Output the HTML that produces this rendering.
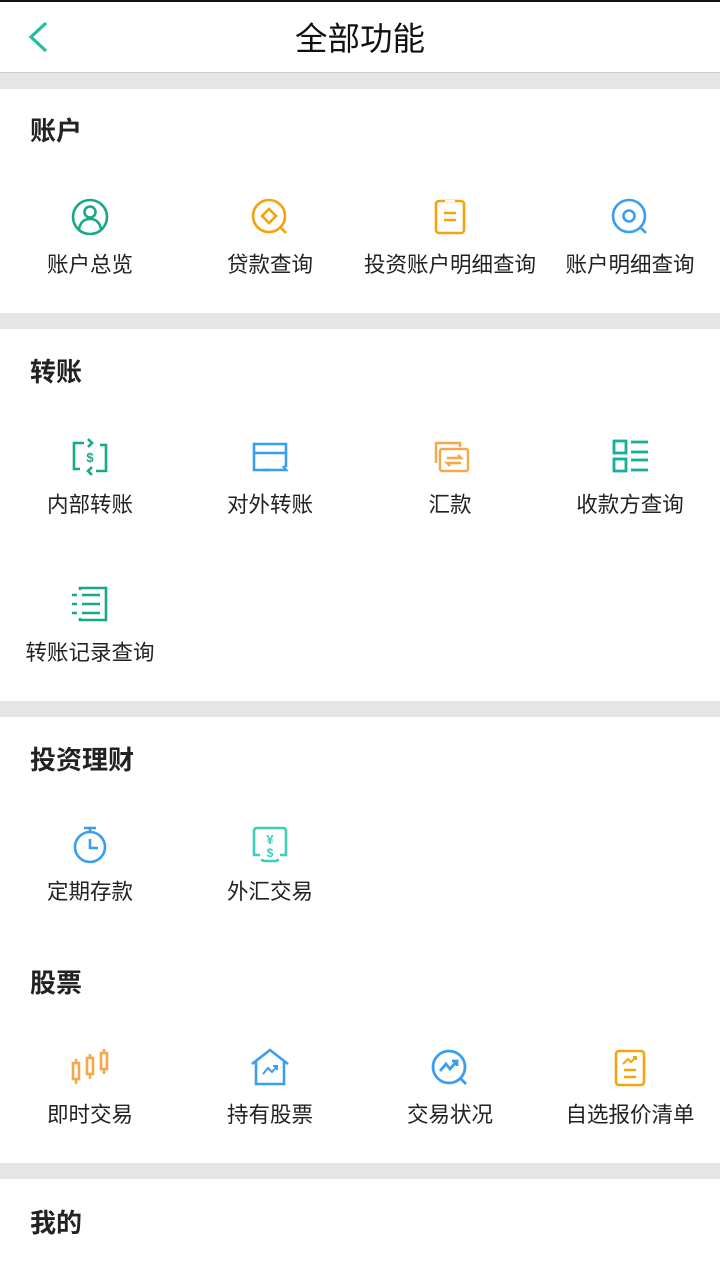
<!DOCTYPE html>
<html><head><meta charset="utf-8"><style>
*{margin:0;padding:0;box-sizing:border-box}
body{width:720px;height:1280px;background:#fff;position:relative;overflow:hidden;font-family:"Liberation Sans","Noto Sans CJK SC",sans-serif;color:#222}
.a{position:absolute}
.gray{position:absolute;left:0;width:720px;height:16px;background:#e6e5e3}
.t{position:absolute;left:30px;font-size:26px;font-weight:bold;color:#222;line-height:1}
.lab{position:absolute;width:180px;text-align:center;font-size:21.5px;color:#222;line-height:1}
.ic{position:absolute;width:40px;height:40px}
</style></head><body>
<div class="a" style="left:0;top:0;width:720px;height:2px;background:#111"></div>
<svg class="a" style="left:26px;top:20px" width="26" height="34" viewBox="0 0 26 34"><path d="M20 3 L5 17 L20 31" fill="none" stroke="#1fbf9f" stroke-width="3.2"/></svg>
<div class="a" style="left:0;top:20px;width:720px;text-align:center;font-size:32.5px;line-height:1.2;color:#111">全部功能</div>
<div class="a" style="left:0;top:72px;width:720px;height:1px;background:#ccc"></div>
<div class="gray" style="top:73px"></div>
<div class="gray" style="top:313px"></div>
<div class="gray" style="top:701px"></div>
<div class="gray" style="top:1163px"></div>

<div class="t" style="top:118px">账户</div>
<div class="t" style="top:359px">转账</div>
<div class="t" style="top:747px">投资理财</div>
<div class="t" style="top:970px">股票</div>
<div class="t" style="top:1210px">我的</div>

<svg class="ic" style="left:70px;top:197px" viewBox="0 0 40 40" fill="none" stroke="#16a889" stroke-width="2.6"><circle cx="20" cy="20" r="17"/><circle cx="20" cy="15" r="5.5"/><path d="M9 32 Q11 22 20 22 Q29 22 31 32"/></svg>
<svg class="ic" style="left:250px;top:197px" viewBox="0 0 40 40" fill="none" stroke="#f4a30a" stroke-width="2.6"><circle cx="19" cy="19" r="16"/><path d="M19 12 L26 19 L19 26 L12 19Z"/><path d="M30 30 L36 36"/></svg>
<svg class="ic" style="left:430px;top:197px" viewBox="0 0 40 40" fill="none" stroke="#f4a30a" stroke-width="2.6"><rect x="6" y="4" width="28" height="32" rx="3"/><path d="M14 16 H26 M14 23 H26"/><path d="M15 4 H25" stroke="#fff" stroke-width="2"/></svg>
<svg class="ic" style="left:610px;top:197px" viewBox="0 0 40 40" fill="none" stroke="#3a9ef0" stroke-width="2.6"><circle cx="19" cy="19" r="16"/><circle cx="19" cy="19" r="5.5"/><path d="M30 30 L36 36"/></svg>
<div class="lab" style="left:0;top:255px">账户总览</div>
<div class="lab" style="left:180px;top:255px">贷款查询</div>
<div class="lab" style="left:360px;top:255px">投资账户明细查询</div>
<div class="lab" style="left:540px;top:255px">账户明细查询</div>

<svg class="ic" style="left:70px;top:437px" viewBox="0 0 40 40" fill="none" stroke="#16a889" stroke-width="2.6"><path d="M14 6 H4 V32 H10"/><path d="M26 34 H36 V8 H30"/><path d="M18 2 L22 6 L18 10 M22 30 L18 34 L22 38"/><text x="20" y="25" font-size="13" font-weight="bold" fill="#16a889" stroke="none" text-anchor="middle" font-family="Liberation Sans">$</text></svg>
<svg class="ic" style="left:250px;top:437px" viewBox="0 0 40 40" fill="none" stroke="#3a9ef0" stroke-width="2.6"><path d="M20 33 H4 V7 H36 V30"/><path d="M4 16 H36"/><path d="M13 33 H36 L33 29"/></svg>
<svg class="ic" style="left:430px;top:437px" viewBox="0 0 40 40" fill="none" stroke="#f5a84a" stroke-width="2.4"><path d="M6 26 V6 H30 V10"/><rect x="10" y="12" width="28" height="22" rx="2"/><path d="M17 21 H31 L28 18 M31 26 H17 L20 29"/></svg>
<svg class="ic" style="left:610px;top:437px" viewBox="0 0 40 40" fill="none" stroke="#16b09a" stroke-width="2.8"><rect x="4" y="4" width="12" height="12"/><rect x="4" y="22" width="12" height="12"/><path d="M21 5 H38 M21 15 H38 M21 23 H38 M21 33 H38"/></svg>
<div class="lab" style="left:0;top:495px">内部转账</div>
<div class="lab" style="left:180px;top:495px">对外转账</div>
<div class="lab" style="left:360px;top:495px">汇款</div>
<div class="lab" style="left:540px;top:495px">收款方查询</div>

<svg class="ic" style="left:70px;top:584px" viewBox="0 0 40 40" fill="none" stroke="#16a889" stroke-width="2.6"><path d="M10 6 V4 H36 V36 H10 V34"/><path d="M2 11 H7 M12 11 H30 M2 20 H7 M12 20 H30 M2 29 H7 M12 29 H30"/></svg>
<div class="lab" style="left:0;top:643px">转账记录查询</div>

<svg class="ic" style="left:70px;top:825px" viewBox="0 0 40 40" fill="none" stroke="#3a9ef0" stroke-width="2.6"><circle cx="20" cy="22" r="15"/><path d="M14 3 H26 M20 3 V7"/><path d="M20 14 V23 H28"/></svg>
<svg class="ic" style="left:250px;top:825px" viewBox="0 0 40 40" fill="none" stroke="#3dcdb8" stroke-width="2.6"><path d="M10 30 H4 V6 Q4 3 7 3 H33 Q36 3 36 6 V30 H30"/><path d="M12 34 Q12 36 15 36 H25 Q28 36 28 34"/><text x="20" y="19" font-size="13" font-weight="bold" fill="#3dcdb8" stroke="none" text-anchor="middle" font-family="Liberation Sans, Noto Sans CJK SC">¥</text><text x="20" y="32" font-size="12" font-weight="bold" fill="#3dcdb8" stroke="none" text-anchor="middle" font-family="Liberation Sans">$</text></svg>
<div class="lab" style="left:0;top:882px">定期存款</div>
<div class="lab" style="left:180px;top:882px">外汇交易</div>

<svg class="ic" style="left:70px;top:1048px" viewBox="0 0 40 40" fill="none" stroke="#f5a84a" stroke-width="2.6"><rect x="3" y="15" width="6" height="16"/><path d="M6 11 V15 M6 31 V36"/><rect x="17" y="10" width="6" height="16"/><path d="M20 6 V10 M20 26 V31"/><rect x="31" y="5" width="6" height="16"/><path d="M34 1 V5 M34 21 V26"/></svg>
<svg class="ic" style="left:250px;top:1048px" viewBox="0 0 40 40" fill="none" stroke="#3a9ef0" stroke-width="2.6"><path d="M2 16 L20 2 L38 16"/><path d="M6 14 V36 H34 V14"/><path d="M13 26 L18 20 L22 24 L27 18 M23 18 H27 V22" stroke-width="2"/></svg>
<svg class="ic" style="left:430px;top:1048px" viewBox="0 0 40 40" fill="none" stroke="#3a9ef0" stroke-width="2.8"><circle cx="19" cy="19" r="16"/><path d="M10 23 L16 16 L20 21 L27 13 M22 13 H27 V18"/><path d="M30 30 L36 36"/></svg>
<svg class="ic" style="left:610px;top:1048px" viewBox="0 0 40 40" fill="none" stroke="#f4a30a" stroke-width="2.6"><rect x="6" y="3" width="28" height="34" rx="3"/><path d="M13 16 L18 11 L21 14 L26 9 M23 9 H26 V12" stroke-width="2"/><path d="M14 22 H26 M14 29 H26"/></svg>
<div class="lab" style="left:0;top:1105px">即时交易</div>
<div class="lab" style="left:180px;top:1105px">持有股票</div>
<div class="lab" style="left:360px;top:1105px">交易状况</div>
<div class="lab" style="left:540px;top:1105px">自选报价清单</div>
</body></html>
